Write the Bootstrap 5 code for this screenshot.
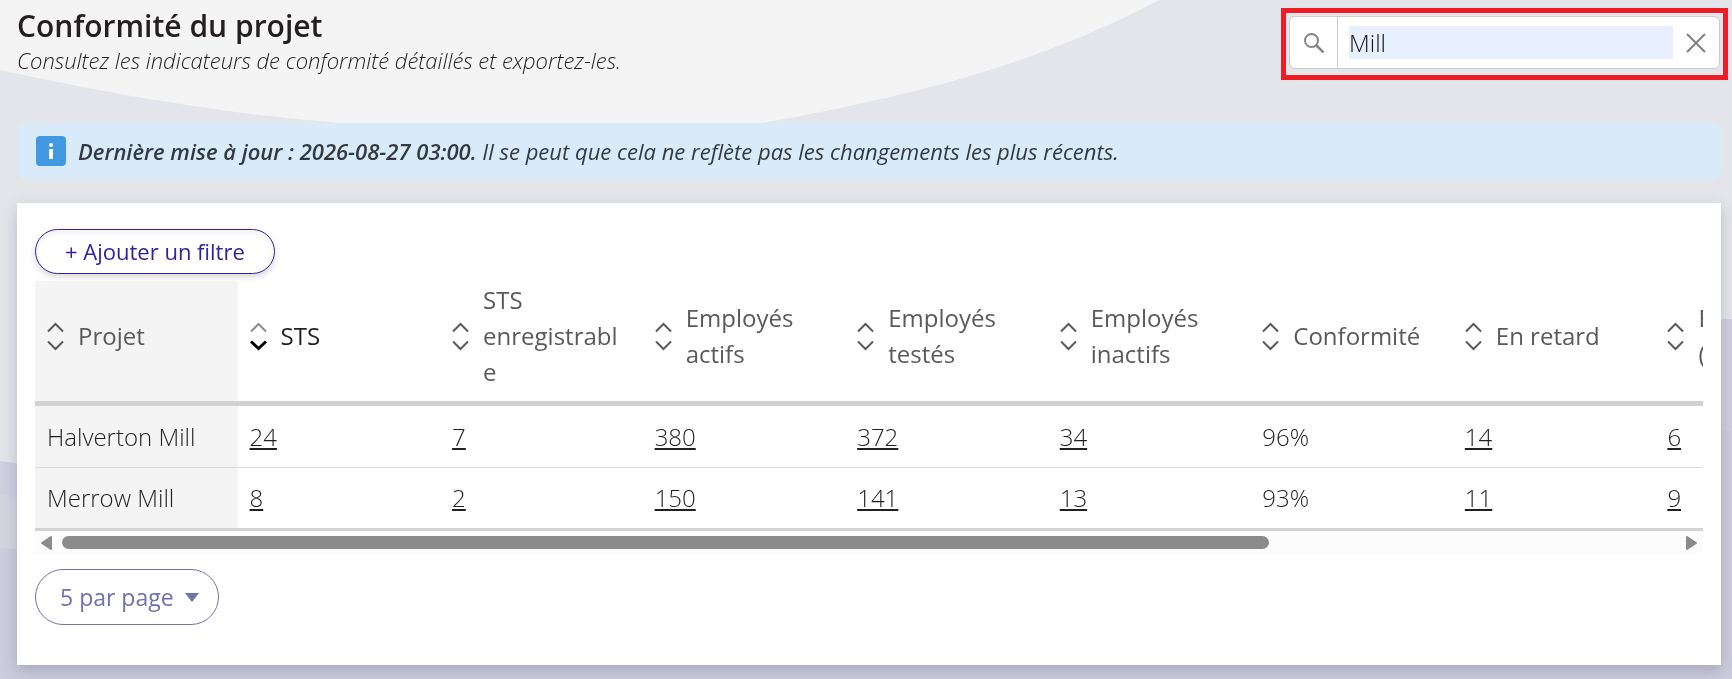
<!DOCTYPE html>
<html lang="fr">
<head>
<meta charset="utf-8">
<meta name="viewport" content="width=device-width, initial-scale=1">
<title>Conformité du projet</title>
<link href="https://cdn.jsdelivr.net/npm/bootstrap@5.3.0/dist/css/bootstrap.min.css" rel="stylesheet">
<style>
  body { font-family: "Open Sans", sans-serif; font-size: 24px; line-height: 36px; color: #231f20; background: #e4e5ea; min-height: 100vh; }
  .backdrop { position: fixed; inset: 0; width: 100%; height: 100%; z-index: -1; }
  .page { padding: 8px 11px 14px 17px; }
  .page-title { font-size: 30px; line-height: 36px; font-weight: 600; }
  .page-subtitle { font-size: 22px; line-height: 32px; font-weight: 300; font-style: italic; }
  .search-frame { width: 447px; border: 5px solid #ee1c25; padding: 3px 3px 6px; margin-right: -7px; }
  .search-box { height: 53px; border: 1px solid #ccc; border-radius: 6px; background: #fff; }
  .search-icon { width: 48px; border-right: 1px solid #ccc; }
  .search-input { height: 33px; min-width: 0; margin-left: 11px; padding: 0; border: 0; outline: 0; background: #e8f0fe; color: #111; font-weight: 300; }
  .search-clear { width: 46px; border: 0; background: none; padding: 0; }
  .notice { margin-top: 43px; padding: 10px 19px; border-radius: 8px; background: #d9ebf9; color: #333a42; font-size: 22px; font-style: italic; gap: 12px; }
  .panel { margin-top: 24px; padding: 26px 18px 40px; background: #fff; box-shadow: 0 6px 14px rgba(60, 55, 90, .24); }
  .filter-btn { height: 45px; padding: 0 29px 2px; border: 1px solid #3023a0; border-radius: 23px; background: #fff; color: #3023a0; font-size: 22px; line-height: 36px; box-shadow: 0 3px 6px rgba(0, 0, 0, .16), inset 0 3px 6px rgba(0, 0, 0, .06); }
  .table-clip { margin-top: 7px; overflow: hidden; }
  .projects { width: 1823px; table-layout: fixed; border-collapse: separate; border-spacing: 0; font-weight: 300; }
  .projects th, .projects td { padding: 0 12px; vertical-align: middle; }
  .projects th:first-child, .projects td:first-child { background: #f4f4f4; }
  .projects thead th { height: 125px; border-bottom: 5px solid #d1d1d1; font-weight: 400; color: #5a5a5a; padding-bottom: 10px; }
  .projects tbody td { height: 62px; border-bottom: 1px solid #d9d9d9; }
  .projects tbody tr:last-child td { height: 63px; border-bottom: 3px solid #d1d1d1; }
  .projects a { color: #231f20; text-decoration-thickness: 2px; text-underline-offset: 2px; text-decoration-skip-ink: none; }
  .sort-btn { display: flex; align-items: center; width: 100%; padding: 0; border: 0; background: none; color: inherit; text-align: left; gap: 14px; }
  .sort-btn svg { flex: none; }
  .sort-btn span { min-width: 0; overflow-wrap: anywhere; }
  .sorted { color: #231f20; }
  .scroll-track { height: 23px; background: #fcfcfc; padding: 0 6px; gap: 10px; }
  .scroll-lane { height: 13px; }
  .scroll-thumb { height: 13px; border-radius: 7px; background: #8b8b8b; }
  .pager { margin-top: 15px; }
  .pager select { appearance: none; width: 184px; height: 56px; padding: 0 24px; border: 1px solid #7270ae; border-radius: 28px; background: #fff; color: #7270ae; font-size: 23px; }
  .pager svg { position: absolute; right: 20px; top: 24px; pointer-events: none; }
</style>
<script src="https://cdn.jsdelivr.net/npm/bootstrap@5.3.0/dist/js/bootstrap.bundle.min.js"></script>
</head>
<body>
<svg class="backdrop" viewBox="0 0 1732 679" preserveAspectRatio="none" aria-hidden="true">
  <path fill="#f4f4f4" d="M0 0H1159C1027 70 894 99 762 123C620 145 470 140 330 122C220 113 110 94 0 70Z"/>
  <path fill="#d0cfdf" d="M0 461C500 530 1200 319 1700 319H1732V679H0Z"/>
  <path fill="#d4d4e0" d="M0 494Q60 508 300 520V560H0Z"/>
  <path fill="#cdccdc" d="M0 548Q60 552 900 560L1700 431H1732V679H0Z"/>
</svg>

<svg class="d-none" aria-hidden="true">
  <symbol id="sort" viewBox="0 0 17 29">
    <path d="M1 9.500L8.500 2L16 9.500M1 19.500L8.500 27L16 19.500" fill="none" stroke="currentColor" stroke-width="2"/>
  </symbol>
</svg>

<div class="page">
  <header class="d-flex justify-content-between align-items-start">
    <div>
      <h1 class="page-title mb-0">Conformité du projet</h1>
      <p class="page-subtitle mb-0">Consultez les indicateurs de conformité détaillés et exportez-les.</p>
    </div>
    <form class="search-frame" role="search">
      <div class="search-box d-flex align-items-center">
        <label for="search" class="search-icon h-100 d-flex align-items-center justify-content-center">
          <span class="visually-hidden">Rechercher</span>
          <svg width="20" height="20" viewBox="0 0 20 20" fill="none" stroke="#858585" stroke-width="2" aria-hidden="true"><circle cx="7.500" cy="7.500" r="6.500"/><path d="M12 12L19.500 19.500" stroke-width="2.500"/></svg>
        </label>
        <input id="search" class="search-input flex-fill" type="text" value="Mill">
        <button class="search-clear" type="button" aria-label="Effacer">
          <svg width="20" height="20" viewBox="0 0 20 20" class="d-block mx-auto"><path d="M1 1L19 19M19 1L1 19" stroke="#808080" stroke-width="2"/></svg>
        </button>
      </div>
    </form>
  </header>

  <div class="notice d-flex align-items-center" role="status">
    <svg width="30" height="30" viewBox="0 0 30 30" class="flex-shrink-0" aria-hidden="true"><rect width="30" height="30" rx="4" fill="#4299e1"/><circle cx="15" cy="9" r="2" fill="#fff"/><path d="M15 13V23" stroke="#fff" stroke-width="4"/></svg>
    <span><strong class="fw-semibold">Dernière mise à jour : 2026-08-27 03:00.</strong> Il se peut que cela ne reflète pas les changements les plus récents.</span>
  </div>

  <main class="panel">
    <button type="button" class="filter-btn d-block">+ Ajouter un filtre</button>
    <div class="table-clip">
      <table class="projects">
        <thead>
          <tr>
            <th><button class="sort-btn"><svg width="17" height="29"><use href="#sort"/></svg><span>Projet</span></button></th>
            <th><button class="sort-btn sorted"><svg width="17" height="29" viewBox="0 0 17 29" fill="none"><path d="M1 9.500L8.500 2L16 9.500" stroke="#8b8b8b" stroke-width="2"/><path d="M1 19.500L8.500 26.500L16 19.500" stroke="#000" stroke-width="3"/></svg><span>STS</span></button></th>
            <th><button class="sort-btn"><svg width="17" height="29"><use href="#sort"/></svg><span>STS enregistrable</span></button></th>
            <th><button class="sort-btn"><svg width="17" height="29"><use href="#sort"/></svg><span>Employés actifs</span></button></th>
            <th><button class="sort-btn"><svg width="17" height="29"><use href="#sort"/></svg><span>Employés testés</span></button></th>
            <th><button class="sort-btn"><svg width="17" height="29"><use href="#sort"/></svg><span>Employés inactifs</span></button></th>
            <th><button class="sort-btn"><svg width="17" height="29"><use href="#sort"/></svg><span>Conformité</span></button></th>
            <th><button class="sort-btn"><svg width="17" height="29"><use href="#sort"/></svg><span>En retard</span></button></th>
            <th><button class="sort-btn"><svg width="17" height="29"><use href="#sort"/></svg><span>En retard<br>(%)</span></button></th>
          </tr>
        </thead>
        <tbody>
          <tr><td>Halverton Mill</td><td><a href="#">24</a></td><td><a href="#">7</a></td><td><a href="#">380</a></td><td><a href="#">372</a></td><td><a href="#">34</a></td><td>96%</td><td><a href="#">14</a></td><td><a href="#">6</a></td></tr>
          <tr><td>Merrow Mill</td><td><a href="#">8</a></td><td><a href="#">2</a></td><td><a href="#">150</a></td><td><a href="#">141</a></td><td><a href="#">13</a></td><td>93%</td><td><a href="#">11</a></td><td><a href="#">9</a></td></tr>
        </tbody>
      </table>
    </div>
    <div class="scroll-track d-flex align-items-center" aria-hidden="true">
      <svg width="11" height="14" viewBox="0 0 11 14"><path d="M10 1V13L1 7Z" fill="#8b8b8b" stroke="#8b8b8b" stroke-width="2" stroke-linejoin="round"/></svg>
      <div class="scroll-lane flex-fill"><div class="scroll-thumb" style="width: 74.8%"></div></div>
      <svg width="11" height="14" viewBox="0 0 11 14"><path d="M1 1V13L10 7Z" fill="#8b8b8b" stroke="#8b8b8b" stroke-width="2" stroke-linejoin="round"/></svg>
    </div>
    <div class="pager d-flex">
      <div class="position-relative">
        <select aria-label="Résultats par page"><option>5 par page</option></select>
        <svg width="14" height="9" viewBox="0 0 14 9"><path d="M0 0H14L7 9Z" fill="#7270ae"/></svg>
      </div>
    </div>
  </main>
</div>
</body>
</html>
